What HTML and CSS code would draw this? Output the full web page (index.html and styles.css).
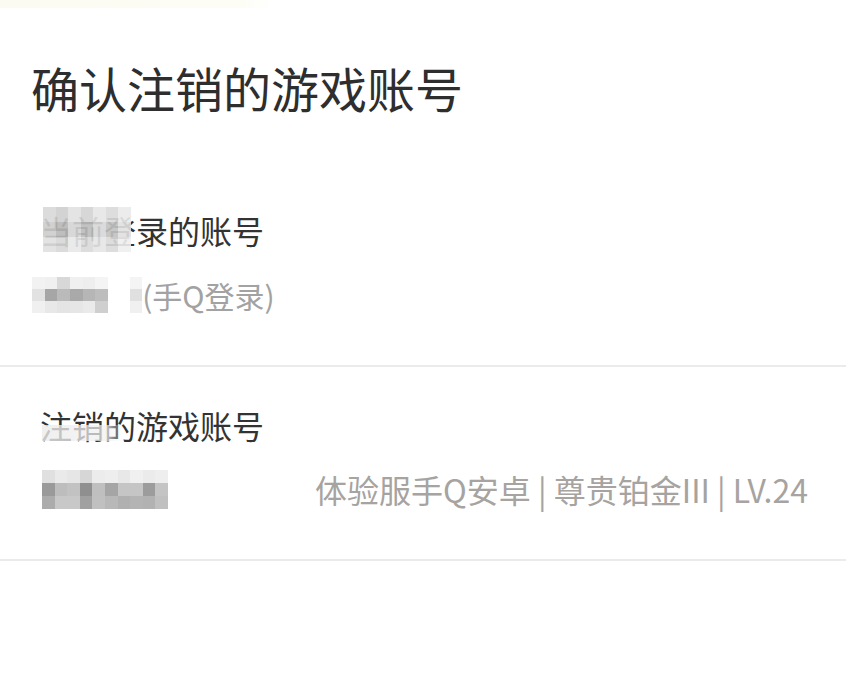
FILE: index.html
```html
<!DOCTYPE html>
<html lang="zh-CN">
<head>
    <meta charset="UTF-8">
    <meta name="viewport" content="width=device-width, initial-scale=1.0">
    <title>确认注销的游戏账号</title>
    <link rel="stylesheet" href="styles.css">
</head>
<body>
    <div class="top-strip"></div>
    <h1 class="title">确认注销的游戏账号</h1>

    <div class="section first">
        <div class="label">
            <span class="masked">当前</span>登录的账号
            <div class="mosaic mosaic-label">
                <i style="background:#d9d9d9"></i><i style="background:#cfcfcf"></i><i style="background:#e2e2e2"></i><i style="background:#d3d3d3"></i><i style="background:#e6e6e6"></i><i style="background:#dadada"></i><i style="background:#ebebeb"></i>
                <i style="background:#cdcdcd"></i><i style="background:#b8b8b8"></i><i style="background:#d4d4d4"></i><i style="background:#bcbcbc"></i><i style="background:#d8d8d8"></i><i style="background:#c2c2c2"></i><i style="background:#e0e0e0"></i>
                <i style="background:#e0e0e0"></i><i style="background:#d8d8d8"></i><i style="background:#e8e8e8"></i><i style="background:#dadada"></i><i style="background:#e6e6e6"></i><i style="background:#dadada"></i><i style="background:#efefef"></i>
            </div>
        </div>
        <div class="row">
            <div class="mosaic mosaic-name1">
                <i style="background:#f2f2f2"></i><i style="background:#f0f0f0"></i><i style="background:#d8d8d8"></i><i style="background:#f0f0f0"></i><i style="background:#eeeeee"></i><i style="background:#f4f4f4"></i>
                <i style="background:#e2e2e2"></i><i style="background:#a6a6a6"></i><i style="background:#bababa"></i><i style="background:#a9a9a9"></i><i style="background:#b6b6b6"></i><i style="background:#bdbdbd"></i>
                <i style="background:#f0f0f0"></i><i style="background:#e8e8e8"></i><i style="background:#e4e4e4"></i><i style="background:#e6e6e6"></i><i style="background:#eaeaea"></i><i style="background:#cfcfcf"></i>
            </div>
            <div class="mosaic mosaic-small">
                <i style="background:#f4f4f4"></i>
                <i style="background:#e0e0e0"></i>
                <i style="background:#f0f0f0"></i>
            </div>
            <span class="muted">(手Q登录)</span>
        </div>
    </div>

    <div class="divider"></div>

    <div class="section">
        <div class="label">
            注销的游戏账号
            <div class="fade"></div>
        </div>
        <div class="row spread">
            <div class="mosaic mosaic-name2">
                <i style="background:#e0e0e0"></i><i style="background:#eaeaea"></i><i style="background:#e6e6e6"></i><i style="background:#d6d6d6"></i><i style="background:#ececec"></i><i style="background:#eeeeee"></i><i style="background:#e8e8e8"></i><i style="background:#f0f0f0"></i><i style="background:#ebebeb"></i><i style="background:#eeeeee"></i>
                <i style="background:#9a9a9a"></i><i style="background:#bdbdbd"></i><i style="background:#c2c2c2"></i><i style="background:#8f8f8f"></i><i style="background:#bfbfbf"></i><i style="background:#a5a5a5"></i><i style="background:#c5c5c5"></i><i style="background:#c5c5c5"></i><i style="background:#9c9c9c"></i><i style="background:#c4c4c4"></i>
                <i style="background:#acacac"></i><i style="background:#c8c8c8"></i><i style="background:#c8c8c8"></i><i style="background:#a0a0a0"></i><i style="background:#c0c0c0"></i><i style="background:#b8b8b8"></i><i style="background:#b0b0b0"></i><i style="background:#b4b4b4"></i><i style="background:#b2b2b2"></i><i style="background:#c0c0c0"></i>
            </div>
            <span class="muted">体验服手Q安卓 | 尊贵铂金III | LV.24</span>
        </div>
    </div>

    <div class="divider"></div>
</body>
</html>
```

FILE: styles.css
```css
body {
    margin: 0;
    background-color: #ffffff;
    font-family: "Noto Sans CJK SC", "Noto Sans", sans-serif;
    color: #333333;
}
.top-strip {
    height: 8px;
    width: 280px;
    background: linear-gradient(to right, #fbfbf1, #fdfdf6 85%, #ffffff);
}
.title {
    margin: 47px 0 52px 31px;
    font-size: 48px;
    line-height: 64px;
    font-weight: 400;
    color: #2e2e2e;
}
.section {
    padding: 36px 38px 48px 40px;
}
.section.first {
    padding-top: 37px;
}
.label {
    position: relative;
    font-size: 32px;
    line-height: 44px;
    color: #333333;
}
.row {
    display: flex;
    align-items: center;
    margin-top: 21px;
    height: 44px;
}
.row.spread {
    justify-content: space-between;
    margin-top: 20px;
}
.muted {
    font-size: 30px;
    color: #a2a2a2;
}
.row.spread .muted {
    font-size: 32px;
    color: #a6a3a0;
}
.mosaic {
    display: grid;
}
.mosaic i {
    display: block;
}
.mosaic-label {
    position: absolute;
    left: 3px;
    top: -1px;
    grid-template-columns: repeat(7, 12.5px);
    grid-auto-rows: 15px;
    opacity: 0.9;
}
.mosaic-name1 {
    margin-left: -8px;
    grid-template-columns: repeat(6, 12.7px);
    grid-auto-rows: 12px;
}
.mosaic-small {
    margin-left: 22px;
    grid-template-columns: 12px;
    grid-auto-rows: 12px;
}
.mosaic-name2 {
    margin-left: 2px;
    grid-template-columns: repeat(10, 12.6px);
    grid-auto-rows: 13px;
}
.fade {
    position: absolute;
    left: 2px;
    top: 22px;
    width: 82px;
    height: 16px;
    background: linear-gradient(to right, rgba(236, 236, 236, 0.8), rgba(240, 240, 240, 0.7) 80%, rgba(255, 255, 255, 0));
}
.divider {
    height: 2px;
    background-color: #ebebeb;
}
```
